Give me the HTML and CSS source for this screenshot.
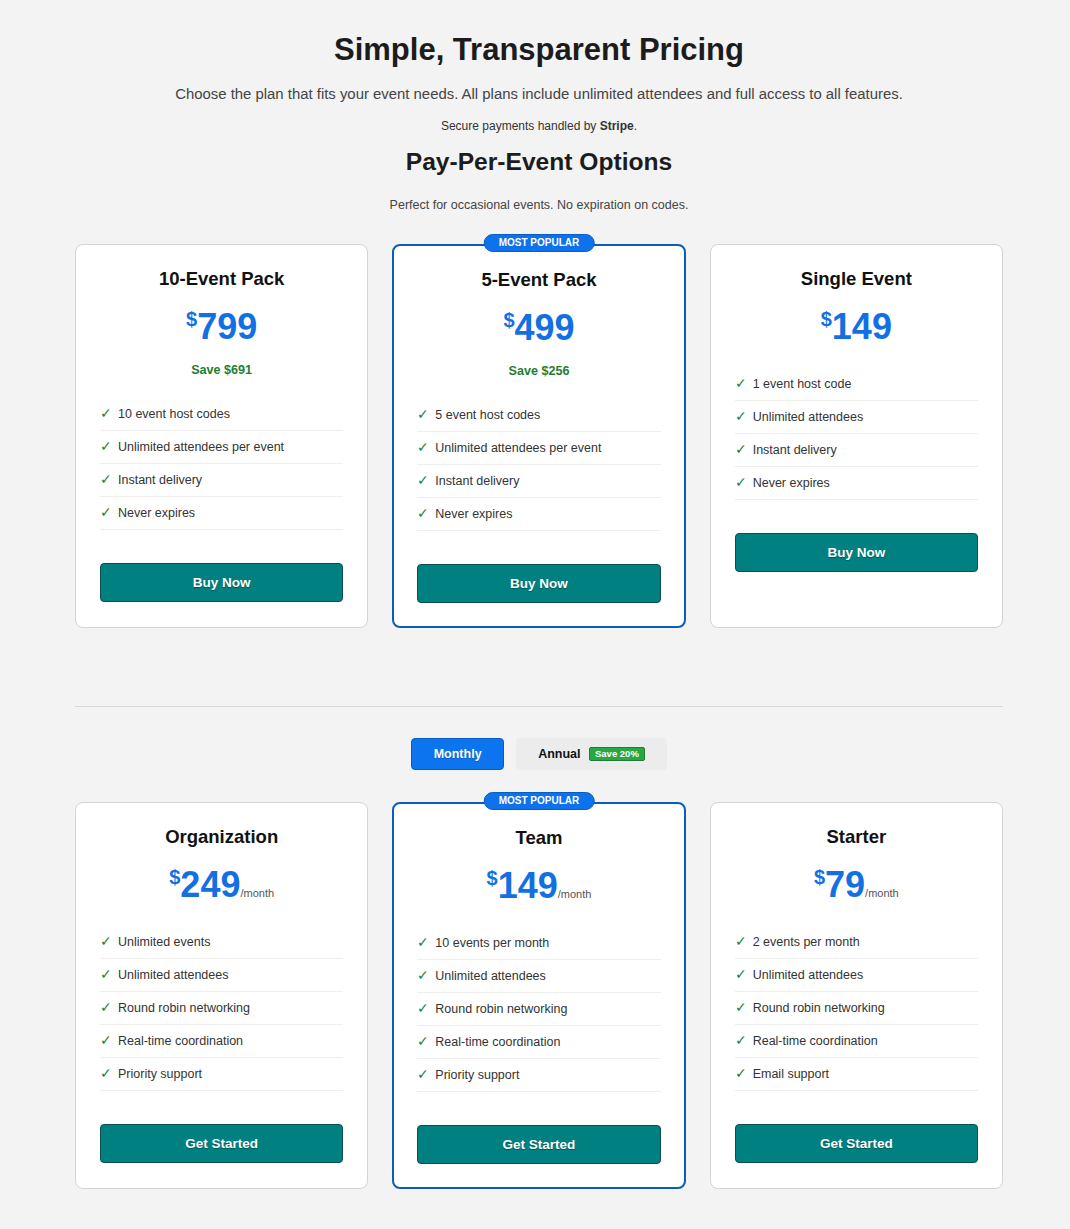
FILE: index.html
```html
<!DOCTYPE html>
<html lang="en">
<head>
  <meta charset="UTF-8">
  <meta name="viewport" content="width=device-width, initial-scale=1.0">
  <title>Pricing</title>
  <link rel="stylesheet" href="styles.css">
</head>
<body>
  <div class="container">
    <h1>Simple, Transparent Pricing</h1>
    <p class="lead">Choose the plan that fits your event needs. All plans include unlimited attendees and full access to all features.</p>
    <p class="secure">Secure payments handled by <strong>Stripe</strong>.</p>

    <h2>Pay-Per-Event Options</h2>
    <p class="note">Perfect for occasional events. No expiration on codes.</p>

    <div class="plans">
      <div class="card">
        <h3>10-Event Pack</h3>
        <div class="price"><span class="cur">$</span>799</div>
        <div class="save">Save $691</div>
        <ul class="features">
          <li>10 event host codes</li>
          <li>Unlimited attendees per event</li>
          <li>Instant delivery</li>
          <li>Never expires</li>
        </ul>
        <button class="btn">Buy Now</button>
      </div>

      <div class="card popular">
        <span class="badge">MOST POPULAR</span>
        <h3>5-Event Pack</h3>
        <div class="price"><span class="cur">$</span>499</div>
        <div class="save">Save $256</div>
        <ul class="features">
          <li>5 event host codes</li>
          <li>Unlimited attendees per event</li>
          <li>Instant delivery</li>
          <li>Never expires</li>
        </ul>
        <button class="btn">Buy Now</button>
      </div>

      <div class="card">
        <h3>Single Event</h3>
        <div class="price"><span class="cur">$</span>149</div>
        <ul class="features">
          <li>1 event host code</li>
          <li>Unlimited attendees</li>
          <li>Instant delivery</li>
          <li>Never expires</li>
        </ul>
        <button class="btn">Buy Now</button>
      </div>
    </div>

    <hr class="divider">

    <div class="toggle">
      <button class="toggle-btn active">Monthly</button>
      <button class="toggle-btn">Annual <span class="save-tag">Save 20%</span></button>
    </div>

    <div class="plans">
      <div class="card">
        <h3>Organization</h3>
        <div class="price"><span class="cur">$</span>249<span class="per">/month</span></div>
        <ul class="features">
          <li>Unlimited events</li>
          <li>Unlimited attendees</li>
          <li>Round robin networking</li>
          <li>Real-time coordination</li>
          <li>Priority support</li>
        </ul>
        <button class="btn">Get Started</button>
      </div>

      <div class="card popular">
        <span class="badge">MOST POPULAR</span>
        <h3>Team</h3>
        <div class="price"><span class="cur">$</span>149<span class="per">/month</span></div>
        <ul class="features">
          <li>10 events per month</li>
          <li>Unlimited attendees</li>
          <li>Round robin networking</li>
          <li>Real-time coordination</li>
          <li>Priority support</li>
        </ul>
        <button class="btn">Get Started</button>
      </div>

      <div class="card">
        <h3>Starter</h3>
        <div class="price"><span class="cur">$</span>79<span class="per">/month</span></div>
        <ul class="features">
          <li>2 events per month</li>
          <li>Unlimited attendees</li>
          <li>Round robin networking</li>
          <li>Real-time coordination</li>
          <li>Email support</li>
        </ul>
        <button class="btn">Get Started</button>
      </div>
    </div>
  </div>
</body>
</html>
```

FILE: styles.css
```css
* {
  margin: 0;
  padding: 0;
  box-sizing: border-box;
}

body {
  font-family: "Liberation Sans", Arial, sans-serif;
  background-color: #f3f3f3;
  color: #222;
  padding-left: 8px;
}

.container {
  max-width: 928px;
  margin: 0 auto;
  padding: 31px 0 36px;
  text-align: center;
}

h1 {
  font-size: 31px;
  line-height: 38px;
  color: #1c1c1c;
}

.lead {
  margin-top: 16px;
  font-size: 14.9px;
  line-height: 19px;
  color: #444;
}

.secure {
  margin-top: 15px;
  font-size: 12px;
  line-height: 15px;
  color: #333;
}

h2 {
  margin-top: 14px;
  font-size: 24.6px;
  line-height: 28px;
  color: #1c1c1c;
}

.note {
  margin-top: 22px;
  font-size: 12.5px;
  line-height: 15px;
  color: #444;
}

/* plan cards */
.plans {
  display: grid;
  grid-template-columns: repeat(3, 1fr);
  gap: 24px;
  margin-top: 31px;
}

.card {
  position: relative;
  background-color: #fff;
  border: 1px solid #d4d4d4;
  border-radius: 8px;
  padding: 23px 24px 24px;
  text-align: center;
}

.card.popular {
  border: 2px solid #0b5db8;
  padding: 23px 23px 23px;
}

.badge {
  position: absolute;
  top: -12px;
  left: 50%;
  transform: translateX(-50%);
  background-color: #0d72ec;
  border: 1px solid #0a5cc0;
  color: #fff;
  font-size: 10px;
  font-weight: bold;
  line-height: 16px;
  padding: 0 14px;
  border-radius: 10px;
  white-space: nowrap;
}

h3 {
  font-size: 18.5px;
  line-height: 22px;
  color: #111;
}

.price {
  margin: 16px 0 21px;
  font-size: 36px;
  line-height: 41px;
  font-weight: bold;
  color: #1270e3;
}

.price .cur {
  font-size: 20px;
  line-height: 0;
  vertical-align: 13px;
}

.price .per {
  font-size: 11px;
  line-height: 0;
  font-weight: normal;
  color: #555;
}

.save {
  margin: -5px 0 20px;
  font-size: 12.6px;
  line-height: 15px;
  font-weight: bold;
  color: #1e7e34;
}

.features {
  list-style: none;
  text-align: left;
  margin-bottom: 33px;
}

.features li {
  font-size: 12.5px;
  line-height: 16px;
  padding: 8px 0;
  border-bottom: 1px solid #eee;
  color: #333;
}

.features li::before {
  content: "\2713";
  display: inline-block;
  width: 18px;
  font-size: 13.5px;
  color: #1e7e34;
}

.btn {
  width: 100%;
  height: 39px;
  background-color: #008080;
  border: 1px solid #0b4f4f;
  border-radius: 4px;
  color: #fff;
  font-family: inherit;
  font-size: 13.5px;
  font-weight: bold;
  text-shadow: 0 1px 1px rgba(0, 0, 0, 0.35);
  cursor: pointer;
}

.divider {
  border: none;
  border-top: 1px solid #d8d8d8;
  margin-top: 78px;
}

/* billing toggle */
.toggle {
  display: flex;
  justify-content: center;
  gap: 12px;
  margin-top: 31px;
}

.toggle-btn {
  height: 32px;
  padding: 0 22px;
  border: none;
  border-radius: 4px;
  background-color: #ececec;
  color: #111;
  font-family: inherit;
  font-size: 12.5px;
  font-weight: bold;
  cursor: pointer;
}

.toggle-btn.active {
  width: 93px;
  padding: 0;
  background-color: #0d74f0;
  border: 1px solid #0a5cc0;
  color: #fff;
  text-shadow: 0 1px 1px rgba(0, 0, 0, 0.25);
}

.save-tag {
  display: inline-block;
  margin-left: 5px;
  background-color: #28a745;
  border: 1px solid #1e7e34;
  color: #fff;
  font-size: 9.5px;
  line-height: 12px;
  padding: 0 5px;
  border-radius: 2px;
  vertical-align: 1px;
}

.toggle + .plans {
  margin-top: 32px;
}
```
